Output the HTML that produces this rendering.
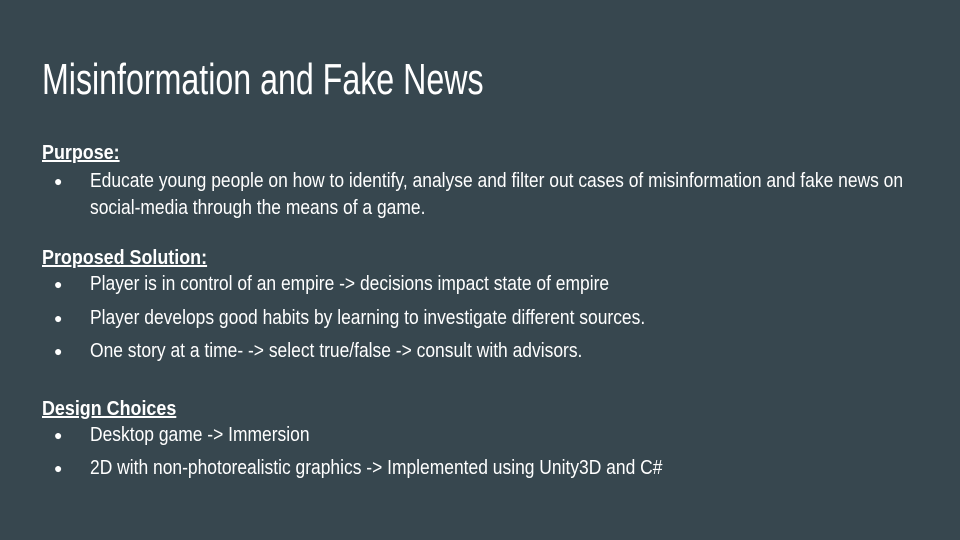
<!DOCTYPE html>
<html><head><meta charset="utf-8"><style>
html,body{margin:0;padding:0}
body{width:960px;height:540px;background:#37474f;position:relative;overflow:hidden;font-family:"Liberation Sans",sans-serif;color:#fff}
.l{position:absolute;white-space:nowrap;transform-origin:left center;transform:scaleX(0.872);font-size:20px;line-height:24px}
.t{position:absolute;left:42px;top:55px;font-size:44px;line-height:50px;white-space:nowrap;transform-origin:left center;transform:scaleX(0.731)}
.h{font-weight:bold;text-decoration:underline;transform:scaleX(0.895)}
.b{position:absolute;left:54px;font-size:14px;line-height:24px}
</style></head><body>
<div class="t">Misinformation and Fake News</div>
<div class="l h" style="left:42px;top:141px">Purpose:</div>
<div class="b" style="top:169px">●</div>
<div class="l" style="left:90px;top:169px">Educate young people on how to identify, analyse and filter out cases of misinformation and fake news on</div>
<div class="l" style="left:90px;top:196px">social-media through the means of a game.</div>
<div class="l h" style="left:42px;top:246px">Proposed Solution:</div>
<div class="b" style="top:272px">●</div>
<div class="l" style="left:90px;top:272px">Player is in control of an empire -&gt; decisions impact state of empire</div>
<div class="b" style="top:306px">●</div>
<div class="l" style="left:90px;top:306px">Player develops good habits by learning to investigate different sources.</div>
<div class="b" style="top:339px">●</div>
<div class="l" style="left:90px;top:339px">One story at a time- -&gt; select true/false -&gt; consult with advisors.</div>
<div class="l h" style="left:42px;top:397px">Design Choices</div>
<div class="b" style="top:423px">●</div>
<div class="l" style="left:90px;top:423px">Desktop game -&gt; Immersion</div>
<div class="b" style="top:456px">●</div>
<div class="l" style="left:90px;top:456px">2D with non-photorealistic graphics -&gt; Implemented using Unity3D and C#</div>
</body></html>
